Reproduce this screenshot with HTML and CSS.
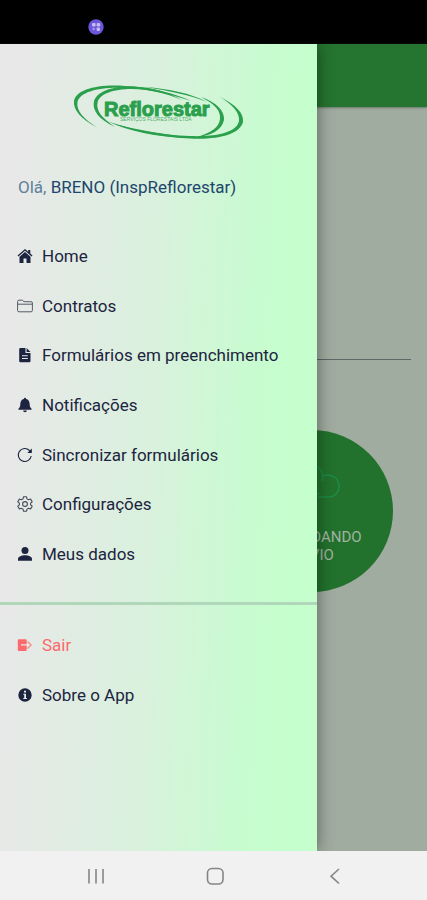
FILE: index.html
```html
<!DOCTYPE html>
<html lang="pt-BR">
<head>
<meta charset="utf-8">
<meta name="viewport" content="width=device-width, initial-scale=1">
<title>Reflorestar</title>
<link rel="stylesheet" href="styles.css">
</head>
<body>
<div class="status">
  <svg class="status-dot" viewBox="0 0 16 16" aria-hidden="true">
    <circle cx="8" cy="8" r="7.7" fill="#6b55d8"/>
    <g fill="#c5bbf5"><rect x="4" y="4" width="3.6" height="3.6" rx="1"/><rect x="8.6" y="4" width="3.6" height="3.6" rx="1"/><rect x="4.4" y="8.8" width="2.6" height="2.4" rx="1" opacity=".6"/><rect x="8.6" y="8.6" width="3.4" height="3.4" rx="1"/></g>
  </svg>
</div>

<div class="screen">
  <main class="page">
    <div class="page-header"></div>
    <div class="page-body">
      <hr class="page-rule">
      <div class="tiles">
        <button class="tile" type="button">
          <svg class="tile-icon" viewBox="0 0 56 48" fill="none" stroke="#1c8a45" stroke-width="1.6" aria-hidden="true">
            <path d="M20 33H13C-3 32-3 12 13 12C14 -3 37 -3 38.500 11V17M38.500 12C47 9 55 14 55 22C55 29 50 33 45 33H34M35 31L28 24L21 31M28 24V45"/>
          </svg>
          <span>AGUARDANDO<br>ENVIO</span>
        </button>
      </div>
    </div>
  </main>

  <aside class="drawer">
    <svg class="logo" viewBox="72 82 174 60" role="img" aria-label="Reflorestar">
      <g fill="#2a9f4c">
        <path d="M97 127.500C81 119 73 110 74 101C76 90 96 84 125 86C150 87 174 93 191 101C168 93 145 88.500 123 88C99 87 80 92 77.500 102C76 111 84 119 97 127.500Z"/>
        <path d="M115 127C98 119 92 110 94 101C97 92 111 86 132 86.500C154 87 169 93 182 100C165 93 149 89 132 89C113 89 99 94 97.500 103C96 111 102 118 115 127Z"/>
        <path d="M201 97C216 102 225 111 224 120C222 130 211 136 195 137.500C212 133 219 127 220 119C221 111 215 104 201 97Z"/>
        <path d="M220 97C236 105 244 113 243 122C240 134 219 140 190 138.500C157 137 127 131 107 121C131 130 161 135 190 136C218 137 237 132 239 121C240 113 233 105 220 97Z"/>
        <path d="M112 123C135 132 164 138 198 138C167 135 136 130 112 123Z"/>
        <path d="M145 87C170 89 190 93 207 102C190 95 170 91 145 87Z"/>
      </g>
      <text class="logo-name" x="104" y="116">Reflorestar</text>
      <text class="logo-sub" x="120" y="121">SERVIÇOS FLORESTAIS LTDA</text>
    </svg>

    <p class="greeting"><span>Olá,</span> BRENO (InspReflorestar)</p>

    <nav aria-label="Menu">
      <ul class="menu">
        <li><a href="#"><svg viewBox="0 0 16 16" fill="currentColor"><path d="M8 .9L.5 7.500L1.400 8.500L8 2.800L14.600 8.500L15.500 7.500L13.300 5.500V2H11.200V3.700Z"/><path d="M8 4L2.500 8.700V15H6.500V10.500H9.500V15H13.500V8.700Z"/></svg>Home</a></li>
        <li><a href="#"><svg viewBox="0 0 16 16" fill="none" stroke="#555b65" stroke-width="1"><path d="M.6 12.500V3.600Q.6 2.200 2 2.200H5.300L7 3.700H14Q15.400 3.700 15.400 5V12.500Q15.400 13.800 14 13.800H2Q.6 13.800.6 12.500ZM.6 6.200H15.400"/></svg>Contratos</a></li>
        <li><a href="#"><svg viewBox="0 0 16 16" fill="currentColor"><path fill-rule="evenodd" d="M3.500 1H8.500V6H13.500V14Q13.500 15.300 12.200 15.300H3.500Q2.200 15.300 2.200 14V2.300Q2.200 1 3.500 1ZM5 8.200V9.200H10.800V8.200ZM5 11V12H10.800V11Z"/><path d="M9.600 1L13.500 4.900H9.600Z"/></svg>Formulários em preenchimento</a></li>
        <li><a href="#"><svg viewBox="0 0 16 16" fill="currentColor"><path d="M8 .8Q9 .8 9.100 1.900C12 2.500 12.600 5 12.700 7.500C12.800 9.700 13.400 10.700 14.600 11.800V12.800H1.400V11.800C2.600 10.700 3.200 9.700 3.300 7.500C3.400 5 4 2.500 6.900 1.900Q7 .8 8 .8ZM6 13.500H10Q9.700 15.300 8 15.300T6 13.500Z"/></svg>Notificações</a></li>
        <li><a href="#"><svg viewBox="0 0 16 16" fill="none" stroke="currentColor" stroke-width="1.100"><path d="M14.200 9A6.500 6.500 0 1 1 12.500 3.500L14 5"/><path d="M14.800 1.500V6H10.300Z" fill="currentColor" stroke="none"/></svg>Sincronizar formulários</a></li>
        <li><a href="#"><svg viewBox="0 0 16 16" fill="none" stroke="#444b56" stroke-width="1.100" stroke-linejoin="round"><path d="M6.500.8H9.500L10 2.900L11.500 3.800L13.600 3.100L15.200 5.800L13.600 7.200V8.800L15.200 10.200L13.600 12.900L11.500 12.200L10 13.100L9.500 15.200H6.500L6 13.100L4.500 12.200L2.400 12.900L.8 10.200L2.400 8.800V7.200L.8 5.800L2.400 3.100L4.500 3.800L6 2.900Z"/><circle cx="8" cy="8" r="2.400"/></svg>Configurações</a></li>
        <li><a href="#"><svg viewBox="0 0 16 16" fill="currentColor"><circle cx="8" cy="4.400" r="3.500"/><path d="M1 14.800V13C1 10.500 5 9.300 8 9.300S15 10.500 15 13V14.800Z"/></svg>Meus dados</a></li>
      </ul>
      <hr class="divider">
      <ul class="menu menu-short">
        <li><a class="exit" href="#"><svg viewBox="0 0 16 16" fill="currentColor"><path fill-rule="evenodd" d="M2 2.300H8.500Q9.700 2.300 9.700 3.500V12.800Q9.700 14 8.500 14H2Q.8 14 .8 12.800V3.500Q.8 2.300 2 2.300ZM4 7.300V8.500H9.700V7.300Z"/><path d="M10.500 4.500L14.200 8L10.500 11.500" fill="none" stroke="currentColor" stroke-width="1.200" opacity=".75"/></svg>Sair</a></li>
        <li><a href="#"><svg viewBox="0 0 16 16" fill="currentColor"><path fill-rule="evenodd" d="M8 1.300A6.700 6.700 0 1 1 8 14.700A6.700 6.700 0 0 1 8 1.300ZM7 3.800V5.500H9V3.800ZM6.300 6.800V7.800H7.200V11H6.200V12H9.900V11H9V6.800Z"/></svg>Sobre o App</a></li>
      </ul>
    </nav>
  </aside>
</div>

<div class="navbar">
  <button type="button" aria-label="Recentes"><svg viewBox="0 0 20 20"><path d="M3 3V17.500M10 3V17.500M17 3V17.500"/></svg></button>
  <button type="button" aria-label="Início"><svg viewBox="0 0 20 20"><rect x="2.500" y="2.500" width="15.500" height="15.500" rx="4.500"/></svg></button>
  <button type="button" aria-label="Voltar"><svg viewBox="0 0 20 20"><path d="M14 3L6 10.200L14 17.500"/></svg></button>
</div>
</body>
</html>
```
FILE: styles.css
```css
* {
  box-sizing: border-box;
}

body {
  margin: 0;
  min-height: 100vh;
  display: flex;
  flex-direction: column;
  font-family: Roboto, "Noto Sans", sans-serif;
  color: #20264a;
}

.status {
  height: 44px;
  padding: 19px 88px 0;
  background: #000;
}

.status-dot {
  display: block;
  width: 16px;
  height: 16px;
}

.screen {
  position: relative;
  flex: 1;
  display: flex;
}

.page {
  flex: 1;
  background: #a1aca0;
}

.page-header {
  height: 63px;
  background: #25742f;
  box-shadow: 0 1px 2px #66796a;
}

.page-body {
  padding: 252px 16px 0;
}

.page-rule {
  height: 1px;
  margin: 0;
  border: 0;
  background: #5c6966;
}

.tiles {
  display: grid;
  grid-template-columns: 1fr 1fr;
  padding-top: 70px;
}

.tile {
  grid-column: 2;
  justify-self: center;
  display: flex;
  flex-direction: column;
  align-items: center;
  gap: 16px;
  width: 162px;
  height: 162px;
  padding: 34px 0 0;
  border: 0;
  border-radius: 50%;
  background: #22722d;
  color: #a1b3a1;
  font: 15px/18px Roboto, "Noto Sans", sans-serif;
}

.tile-icon {
  width: 56px;
  height: 48px;
}

.drawer {
  position: absolute;
  inset: 0 auto 0 0;
  width: 317px;
  max-width: 80vw;
  background: linear-gradient(92deg, #e8e8e8 6%, #d9f1dd 48%, #c8fbd0 76%, #c5ffcd 92%);
  box-shadow: 0 0 16px rgba(0, 0, 0, 0.45);
  clip-path: inset(0 -24px 0 0);
}

.logo {
  display: block;
  width: 174px;
  height: 60px;
  margin: 38px auto 0;
}

.logo-name {
  font: bold 20px "Liberation Sans", sans-serif;
  fill: #2a9f4c;
  stroke: #2a9f4c;
  stroke-width: 1px;
}

.logo-sub {
  font: 5px "Liberation Sans", sans-serif;
  fill: #4fae6b;
}

.greeting {
  margin: 33px 18px 0;
  font-size: 17px;
  line-height: 24px;
  color: #1d466c;
}

.greeting span {
  color: #60809a;
}

.menu {
  display: grid;
  grid-auto-rows: 1fr;
  min-height: 348px;
  margin: 32px 0 0;
  padding: 0;
  list-style: none;
}

.menu a {
  display: flex;
  align-items: center;
  gap: 9px;
  height: 100%;
  padding: 0 17px;
  font-size: 17px;
  line-height: 24px;
  color: #1d2440;
  text-decoration: none;
}

.menu svg {
  flex: none;
  width: 16px;
  height: 16px;
}

.menu .exit {
  color: #fb6a6c;
}

.divider {
  height: 3px;
  margin: 23px 0 0;
  border: 0;
  background: #b0d7b9;
}

.menu-short {
  min-height: 100px;
  margin-top: 15px;
}

.navbar {
  display: grid;
  grid-template-columns: repeat(3, 1fr);
  height: 49px;
  padding: 0 32px 0 36px;
  background: #f1f1f1;
}

.navbar button {
  display: grid;
  place-items: center;
  padding: 0;
  border: 0;
  background: none;
}

.navbar svg {
  width: 20px;
  height: 20px;
  fill: none;
  stroke: #858585;
  stroke-width: 1.6px;
}
```
